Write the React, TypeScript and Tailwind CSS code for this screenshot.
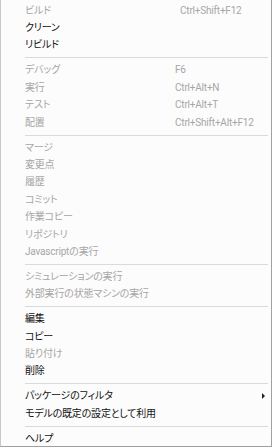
import React from 'react';

type Item = { label: string; shortcut?: string; enabled?: boolean; submenu?: boolean; shift?: boolean };

const groups: Item[][] = [
  [
    { label: 'ビルド', shortcut: 'Ctrl+Shift+F12', shift: true },
    { label: 'クリーン', enabled: true },
    { label: 'リビルド', enabled: true },
  ],
  [
    { label: 'デバッグ', shortcut: 'F6' },
    { label: '実行', shortcut: 'Ctrl+Alt+N' },
    { label: 'テスト', shortcut: 'Ctrl+Alt+T' },
    { label: '配置', shortcut: 'Ctrl+Shift+Alt+F12' },
  ],
  [
    { label: 'マージ' },
    { label: '変更点' },
    { label: '履歴' },
    { label: 'コミット' },
    { label: '作業コピー' },
    { label: 'リポジトリ' },
    { label: 'Javascriptの実行' },
  ],
  [
    { label: 'シミュレーションの実行' },
    { label: '外部実行の状態マシンの実行' },
  ],
  [
    { label: '編集', enabled: true },
    { label: 'コピー', enabled: true },
    { label: '貼り付け' },
    { label: '削除', enabled: true },
  ],
  [
    { label: 'パッケージのフィルタ', enabled: true, submenu: true },
    { label: 'モデルの既定の設定として利用', enabled: true },
  ],
  [{ label: 'ヘルプ', enabled: true }],
];

const App = () => {
  return (
    <div className="w-[273px] h-[448px] bg-white overflow-hidden">
      <div
        className="w-[272px] h-[447px] bg-[#fcfcfc] border-l border-r border-b border-l-[#c8c8c8] border-r-[#a0a0a0] border-b-[#a0a0a0] pt-[2px] text-[10px] tracking-[-0.2px] [font-feature-settings:'palt'] leading-none"
        style={{ fontFamily: 'Roboto, "Noto Sans CJK JP", sans-serif' }}
      >
        {groups.map((group, gi) => (
          <div key={gi}>
            {gi > 0 && (
              <div className="h-[7.6px] flex items-center pl-[24px] pr-[3px]">
                <div className="h-px w-full bg-[#dadada]"></div>
              </div>
            )}
            {group.map((item, ii) => (
              <div
                key={ii}
                className={`h-[17.4px] flex items-center pl-[24px] relative ${item.enabled ? 'text-[#111]' : 'text-[#a6a6a6]'}`}
              >
                <span className="w-[150px] whitespace-nowrap">{item.label}</span>
                {item.shortcut && (
                  <span className={`whitespace-nowrap ${item.shift ? 'ml-[5px]' : ''}`}>{item.shortcut}</span>
                )}
                {item.submenu && (
                  <span className="absolute right-[6px] top-1/2 -translate-y-1/2 w-0 h-0 border-y-[3px] border-y-transparent border-l-[3px] border-l-[#222]"></span>
                )}
              </div>
            ))}
          </div>
        ))}
      </div>
    </div>
  );
};

export default App;
